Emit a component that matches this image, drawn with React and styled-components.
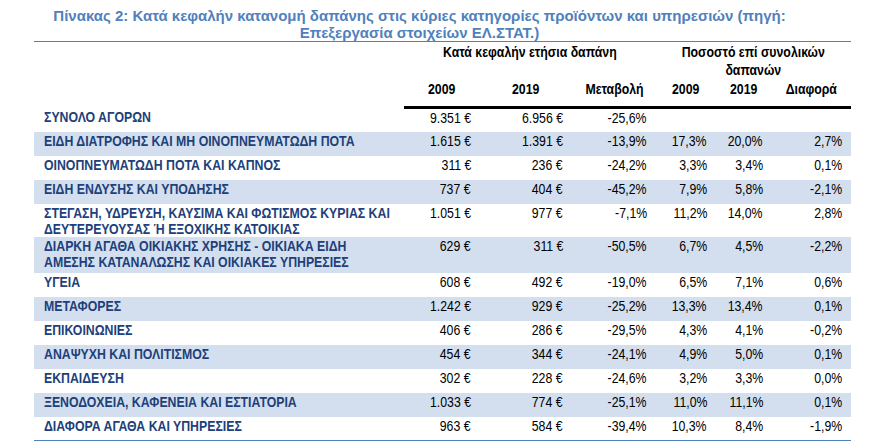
import React from 'react'
import styled, { createGlobalStyle } from 'styled-components'

const Global = createGlobalStyle`
  body {
    margin: 0;
    background: #fff;
    font-family: "Liberation Sans", Arial, sans-serif;
  }
`

const Wrap = styled.div`
  margin-left: 34px;
  width: 817px;
`

const Title = styled.h1`
  margin: 0;
  padding: 7px 46px 0 0;
  font-size: 15px;
  line-height: 17px;
  font-weight: bold;
  color: #4f81bd;
  text-align: center;
  border-bottom: 1px solid #4f81bd;
`

const Table = styled.table`
  width: 817px;
  border-collapse: collapse;
  table-layout: fixed;
  font-size: 15px;
  line-height: 16px;
  border-bottom: 1px solid #4f81bd;
`

// Arial Narrow is not installed: Arial metrics squeezed to the narrow width
const Narrow = styled.span`
  display: inline-block;
  white-space: nowrap;
  transform: scaleX(0.82);
  transform-origin: ${(p) => p.$origin || 'left'};
`

const GroupHead = styled.th`
  font-weight: bold;
  text-align: center;
  vertical-align: top;
  padding: 1px 0 1px;
  line-height: 18px;
  color: #000;
`

const YearHead = styled.th`
  font-weight: bold;
  text-align: center;
  vertical-align: top;
  padding: 1px 0 9px;
  color: #000;
  border-bottom: 3px solid #000;
`

const Row = styled.tr`
  background: ${(p) => (p.$shaded ? '#d3dfee' : '#fff')};
  height: ${(p) => p.$h || 24}px;
`

const Label = styled.td`
  vertical-align: top;
  padding: 1px 10px 0;
  font-weight: bold;
  color: #213f7a;
`

const Num = styled.td`
  vertical-align: top;
  padding: 1px 9px 0 0;
  text-align: right;
  color: #000;
  white-space: nowrap;
`

const widths = [370, 76, 92, 84, 60, 56, 79]

const rows = [
  [['ΣΥΝΟΛΟ ΑΓΟΡΩΝ'], '9.351 €', '6.956 €', '-25,6%', '', '', ''],
  [['ΕΙΔΗ ΔΙΑΤΡΟΦΗΣ ΚΑΙ ΜΗ ΟΙΝΟΠΝΕΥΜΑΤΩΔΗ ΠΟΤΑ'], '1.615 €', '1.391 €', '-13,9%', '17,3%', '20,0%', '2,7%'],
  [['ΟΙΝΟΠΝΕΥΜΑΤΩΔΗ ΠΟΤΑ ΚΑΙ ΚΑΠΝΟΣ'], '311 €', '236 €', '-24,2%', '3,3%', '3,4%', '0,1%'],
  [['ΕΙΔΗ ΕΝΔΥΣΗΣ ΚΑΙ ΥΠΟΔΗΣΗΣ'], '737 €', '404 €', '-45,2%', '7,9%', '5,8%', '-2,1%'],
  [['ΣΤΕΓΑΣΗ, ΥΔΡΕΥΣΗ,  ΚΑΥΣΙΜΑ ΚΑΙ ΦΩΤΙΣΜΟΣ ΚΥΡΙΑΣ ΚΑΙ', 'ΔΕΥΤΕΡΕΥΟΥΣΑΣ Ή ΕΞΟΧΙΚΗΣ ΚΑΤΟΙΚΙΑΣ'], '1.051 €', '977 €', '-7,1%', '11,2%', '14,0%', '2,8%', 33],
  [['ΔΙΑΡΚΗ ΑΓΑΘΑ ΟΙΚΙΑΚΗΣ ΧΡΗΣΗΣ  - ΟΙΚΙΑΚΑ ΕΙΔΗ', 'ΑΜΕΣΗΣ ΚΑΤΑΝΑΛΩΣΗΣ ΚΑΙ ΟΙΚΙΑΚΕΣ ΥΠΗΡΕΣΙΕΣ'], '629 €', '311 €', '-50,5%', '6,7%', '4,5%', '-2,2%', 36],
  [['ΥΓΕΙΑ'], '608 €', '492 €', '-19,0%', '6,5%', '7,1%', '0,6%'],
  [['ΜΕΤΑΦΟΡΕΣ'], '1.242 €', '929 €', '-25,2%', '13,3%', '13,4%', '0,1%'],
  [['ΕΠΙΚΟΙΝΩΝΙΕΣ'], '406 €', '286 €', '-29,5%', '4,3%', '4,1%', '-0,2%'],
  [['ΑΝΑΨΥΧΗ ΚΑΙ ΠΟΛΙΤΙΣΜΟΣ'], '454 €', '344 €', '-24,1%', '4,9%', '5,0%', '0,1%'],
  [['ΕΚΠΑΙΔΕΥΣΗ'], '302 €', '228 €', '-24,6%', '3,2%', '3,3%', '0,0%'],
  [['ΞΕΝΟΔΟΧΕΙΑ, ΚΑΦΕΝΕΙΑ ΚΑΙ ΕΣΤΙΑΤΟΡΙΑ'], '1.033 €', '774 €', '-25,1%', '11,0%', '11,1%', '0,1%'],
  [['ΔΙΑΦΟΡΑ ΑΓΑΘΑ ΚΑΙ ΥΠΗΡΕΣΙΕΣ'], '963 €', '584 €', '-39,4%', '10,3%', '8,4%', '-1,9%'],
]

const years = ['2009', '2019', 'Μεταβολή', '2009', '2019', 'Διαφορά']

export default function App() {
  return (
    <Wrap>
      <Global />
      <Title>
        Πίνακας 2: Κατά κεφαλήν κατανομή δαπάνης στις κύριες κατηγορίες προϊόντων και υπηρεσιών (πηγή:
        <br />
        Επεξεργασία στοιχείων ΕΛ.ΣΤΑΤ.)
      </Title>
      <Table>
        <colgroup>
          {widths.map((w, i) => (
            <col key={i} style={{ width: w }} />
          ))}
        </colgroup>
        <thead>
          <tr>
            <th />
            <GroupHead colSpan={3}>
              <Narrow $origin="center">Κατά κεφαλήν ετήσια δαπάνη</Narrow>
            </GroupHead>
            <GroupHead colSpan={3}>
              <Narrow $origin="center">
                Ποσοστό επί συνολικών
                <br />
                δαπανών
              </Narrow>
            </GroupHead>
          </tr>
          <tr>
            <th />
            {years.map((y, i) => (
              <YearHead key={i}>
                <Narrow $origin="center">{y}</Narrow>
              </YearHead>
            ))}
          </tr>
        </thead>
        <tbody>
          {rows.map((r, i) => (
            <Row key={i} $shaded={i % 2 === 1} $h={r[7]}>
              <Label>
                <Narrow>
                  {r[0].map((line, k) => (
                    <React.Fragment key={k}>
                      {k > 0 && <br />}
                      {line}
                    </React.Fragment>
                  ))}
                </Narrow>
              </Label>
              {r.slice(1, 7).map((v, j) => (
                <Num key={j}>
                  <Narrow $origin="right">{v}</Narrow>
                </Num>
              ))}
            </Row>
          ))}
        </tbody>
      </Table>
    </Wrap>
  )
}
